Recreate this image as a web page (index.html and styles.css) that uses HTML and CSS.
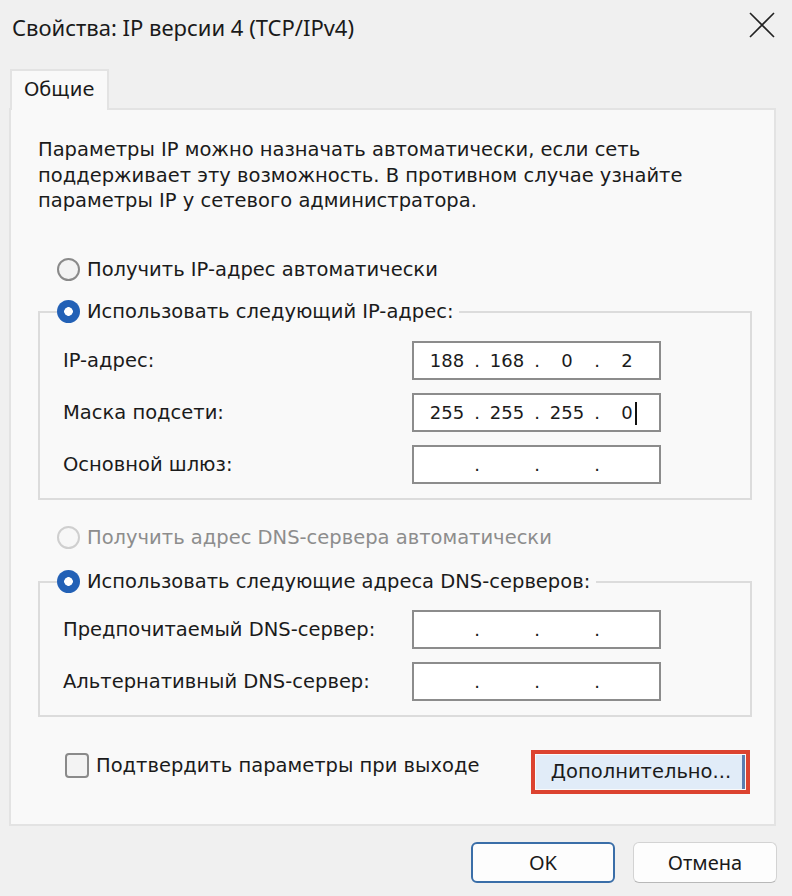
FILE: index.html
```html
<!DOCTYPE html>
<html lang="ru">
<head>
<meta charset="utf-8">
<link rel="stylesheet" href="styles.css">
</head>
<body>
<div class="dialog">
  <div class="titlebar">
    <span class="title">Свойства: IP версии 4 (TCP/IPv4)</span>
    <svg class="close" width="26" height="26" viewBox="0 0 26 26"><path d="M1 1 L25 25 M25 1 L1 25" stroke="#222" stroke-width="1.6" fill="none"/></svg>
  </div>
  <div class="tabstrip"><div class="tab">Общие</div></div>
  <div class="panel">
    <p class="intro">Параметры IP можно назначать автоматически, если сеть<br>поддерживает эту возможность. В противном случае узнайте<br>параметры IP у сетевого администратора.</p>

    <div class="radio-row first"><span class="radio"></span><span>Получить IP-адрес автоматически</span></div>

    <fieldset class="group g1">
      <legend><span class="radio checked"></span><span>Использовать следующий IP-адрес:</span></legend>
      <div class="field"><span class="label">IP-адрес:</span>
        <div class="ipbox"><span class="seg">188</span><span class="dot">.</span><span class="seg">168</span><span class="dot">.</span><span class="seg">0</span><span class="dot">.</span><span class="seg">2</span></div></div>
      <div class="field"><span class="label">Маска подсети:</span>
        <div class="ipbox"><span class="seg">255</span><span class="dot">.</span><span class="seg">255</span><span class="dot">.</span><span class="seg">255</span><span class="dot">.</span><span class="seg caret">0</span></div></div>
      <div class="field"><span class="label">Основной шлюз:</span>
        <div class="ipbox"><span class="seg"></span><span class="dot">.</span><span class="seg"></span><span class="dot">.</span><span class="seg"></span><span class="dot">.</span><span class="seg"></span></div></div>
    </fieldset>

    <div class="radio-row disabled"><span class="radio"></span><span>Получить адрес DNS-сервера автоматически</span></div>

    <fieldset class="group g2">
      <legend><span class="radio checked"></span><span>Использовать следующие адреса DNS-серверов:</span></legend>
      <div class="field"><span class="label">Предпочитаемый DNS-сервер:</span>
        <div class="ipbox"><span class="seg"></span><span class="dot">.</span><span class="seg"></span><span class="dot">.</span><span class="seg"></span><span class="dot">.</span><span class="seg"></span></div></div>
      <div class="field"><span class="label">Альтернативный DNS-сервер:</span>
        <div class="ipbox"><span class="seg"></span><span class="dot">.</span><span class="seg"></span><span class="dot">.</span><span class="seg"></span><span class="dot">.</span><span class="seg"></span></div></div>
    </fieldset>

    <div class="bottom-row">
      <div class="check-row"><span class="checkbox"></span><span>Подтвердить параметры при выходе</span></div>
      <button class="adv">Дополнительно...</button>
    </div>
  </div>
  <div class="footer">
    <button class="btn primary">OK</button>
    <button class="btn">Отмена</button>
  </div>
</div>
</body>
</html>
```
FILE: styles.css
```css
* { box-sizing: border-box; }
html, body { margin: 0; padding: 0; }
body {
  width: 792px;
  height: 896px;
  background: #f0f0f0;
  overflow: hidden;
  font-family: "DejaVu Sans", "Liberation Sans", sans-serif;
  font-size: 19.5px;
  color: #1b1b1b;
}
.dialog { width: 792px; height: 896px; }

.titlebar {
  height: 55px;
  display: flex;
  align-items: center;
  justify-content: space-between;
  padding: 0 17px 2px 12px;
}
.title {
  font-family: "Noto Sans", "Open Sans", sans-serif;
  font-size: 22px;
  color: #1a1a1a;
}
.close { margin-top: -4px; }

.tabstrip {
  margin-top: 14px;
  padding-left: 10px;
  display: flex;
}
.tab {
  position: relative;
  z-index: 1;
  height: 41px;
  width: 99px;
  margin-bottom: -2px;
  background: #f9f9f9;
  border: 2px solid #e3e3e3;
  border-bottom: none;
  padding: 6px 0 0 12px;
  line-height: 26px;
}

.panel {
  margin-left: 9px;
  width: 767px;
  height: 718px;
  background: #f9f9f9;
  border: 2px solid #e3e3e3;
  padding: 27px 22px 0 27px;
}
.intro {
  margin: 0;
  line-height: 25.5px;
}

.radio-row {
  display: flex;
  align-items: center;
  gap: 7px;
  height: 30px;
  padding-left: 19px;
}
.radio-row.first { margin-top: 41px; }
.radio-row.disabled { margin-top: 23px; color: #8d8d8d; }

.radio {
  width: 23px;
  height: 23px;
  border-radius: 50%;
  border: 2px solid #8a8a8a;
  background: #f3f3f3;
  display: inline-block;
  flex: none;
}
.radio.checked {
  border: none;
  background: radial-gradient(circle, #ffffff 0 4px, #2361b6 4.6px);
}
.radio-row.disabled .radio { border-color: #cfcfcf; background: #f7f7f7; }

.group {
  margin: 12px 0 0 0;
  padding: 14px 0 14px 23px;
  border: 2px solid #dcdcdc;
  width: 714px;
  min-width: 0;
}
.group.g2 { margin-top: 14px; padding-top: 13px; }
.group legend {
  margin-left: -6px;
  padding: 0 6px 0 0;
  display: flex;
  align-items: center;
  gap: 7px;
  height: 30px;
}

.field {
  display: flex;
  align-items: center;
  height: 39px;
}
.field + .field { margin-top: 13px; }
.label { width: 349px; flex: none; }

.ipbox {
  width: 249px;
  height: 39px;
  background: #ffffff;
  border: 2px solid #8c8c8c;
  display: flex;
  align-items: center;
  padding-left: 15px;
  font-size: 18px;
}
.seg { width: 36px; text-align: center; position: relative; }
.dot { width: 24px; text-align: center; }
.seg.caret::after {
  content: "";
  position: absolute;
  top: 0;
  left: 26px;
  width: 2px;
  height: 23px;
  background: #111;
}

.bottom-row {
  margin-top: 38px;
  width: 714px;
  display: flex;
  align-items: center;
  justify-content: space-between;
  padding: 0 7px 0 27px;
  height: 34px;
}
.check-row { display: flex; align-items: center; gap: 7px; margin-top: -12px; }
.checkbox {
  width: 24px;
  height: 25px;
  border: 2px solid #8a8a8a;
  border-radius: 4px;
  background: #f3f3f3;
  display: inline-block;
}
.adv {
  font-family: inherit;
  font-size: 19.5px;
  color: #1b1b1b;
  width: 209px;
  height: 34px;
  background: #e1ecf8;
  border: none;
  border-right: 3px solid #5b7db0;
  padding: 0 0 0 4px;
  outline: 4px solid #dc4330;
  outline-offset: 1px;
}

.footer {
  display: flex;
  justify-content: flex-end;
  gap: 18px;
  padding: 16px 15px 0 0;
}
.btn {
  width: 144px;
  height: 41px;
  font-family: "Noto Sans", "Open Sans", sans-serif;
  font-size: 20px;
  color: #1a1a1a;
  background: #fdfdfd;
  border: 1.5px solid #d3d3d3;
  border-bottom-color: #b8b8b8;
  border-radius: 6px;
}
.btn.primary {
  border: 2px solid #3a6ea8;
  background: #fdfdfd;
}
```
